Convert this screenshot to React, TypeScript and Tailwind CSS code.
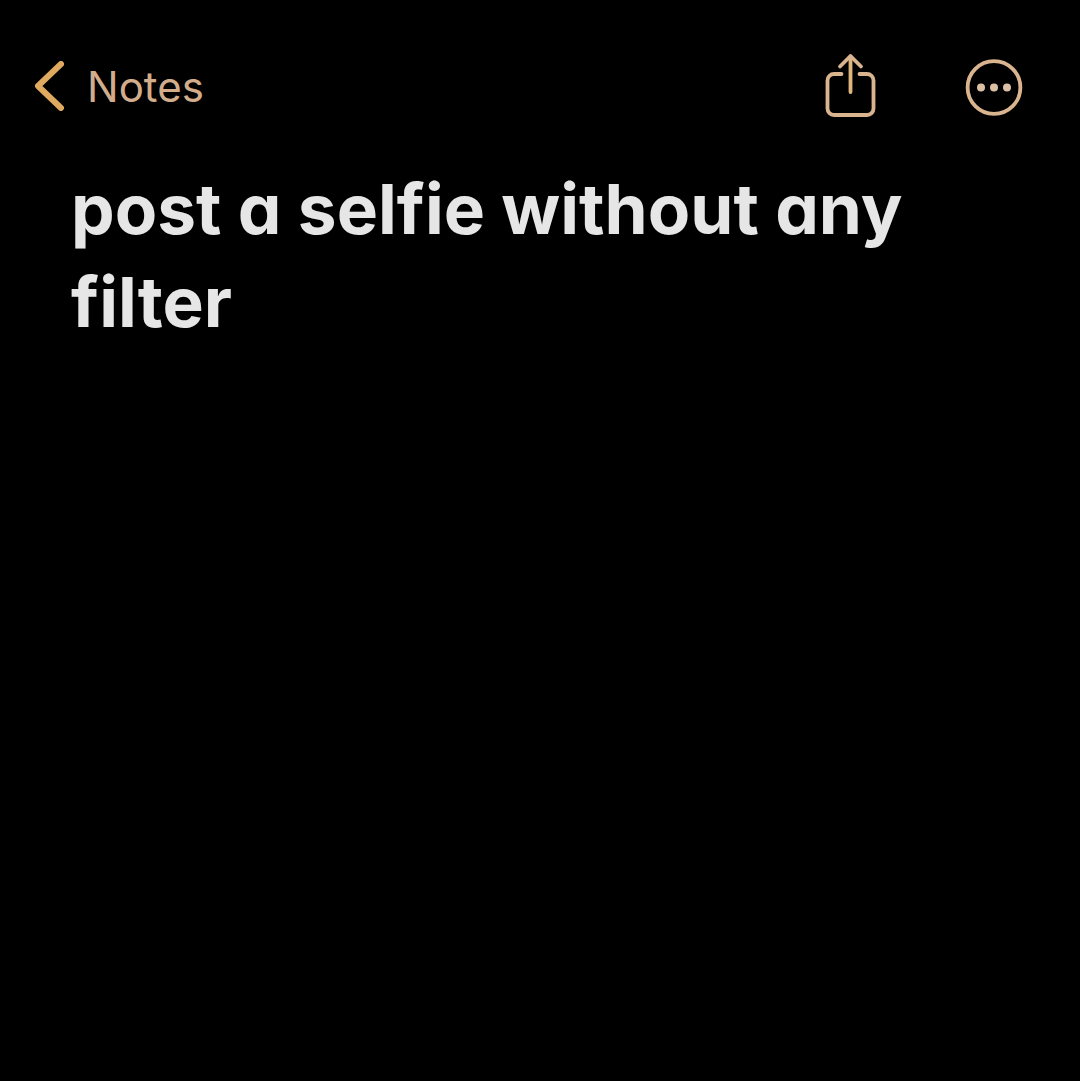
import React from 'react';

function ShareIcon() {
  return (
    <svg width="54" height="66" viewBox="0 0 54 66" fill="none" stroke="#d9b48f" strokeWidth="3.8" strokeLinecap="round" strokeLinejoin="round">
      <path d="M18.5 21H11a6.5 6.5 0 0 0-6.5 6.5v28A6.5 6.5 0 0 0 11 62h33a6.5 6.5 0 0 0 6.5-6.5v-28A6.5 6.5 0 0 0 44 21h-7.5" />
      <path d="M27.5 39V3.5" stroke="#e0b67f" />
      <path d="M17 13.5 27.5 3l10.5 10.5" />
    </svg>
  );
}

function MoreIcon() {
  return (
    <svg width="58" height="62" viewBox="0 0 58 62" fill="none">
      <circle cx="29" cy="32.5" r="26.4" stroke="#d9b48f" strokeWidth="3.8" />
      <circle cx="16" cy="32.5" r="4" fill="#dcc0a4" />
      <circle cx="29" cy="32.5" r="4" fill="#dcc0a4" />
      <circle cx="42" cy="32.5" r="4" fill="#dcc0a4" />
    </svg>
  );
}

export default function App() {
  return (
    <div className="min-h-[1081px] w-[1080px] bg-black font-['Inter','Liberation_Sans',sans-serif] [font-feature-settings:'cv11']">
      <header className="flex items-center pl-[34px] pr-[57px] pt-[53px]">
        <svg width="30" height="50" viewBox="0 0 30 50" fill="none" stroke="#dfa95f" strokeWidth="6" strokeLinecap="round" strokeLinejoin="round">
          <path d="M27 3 4 25l23 22" />
        </svg>
        <span className="ml-[23px] mt-[2px] text-[42px] leading-none text-[#d3ad8b]">Notes</span>
        <div className="ml-auto flex items-center gap-[88px]">
          <ShareIcon />
          <MoreIcon />
        </div>
      </header>
      <h1 className="ml-[71px] mt-[44px] w-[900px] text-[69.3px] font-bold leading-[93px] text-[#e6e6e6]">
        post a selfie without any filter
      </h1>
    </div>
  );
}
